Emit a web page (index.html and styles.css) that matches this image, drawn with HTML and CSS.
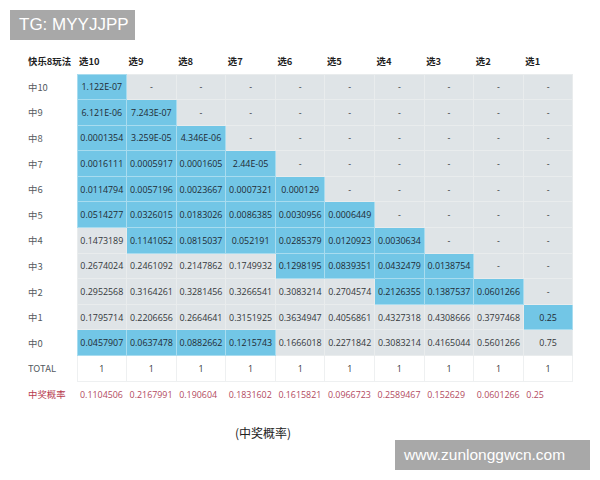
FILE: index.html
```html
<!DOCTYPE html>
<html lang="zh">
<head>
<meta charset="utf-8">
<link rel="stylesheet" href="styles.css">
</head>
<body>
<div class="page">
  <div class="wm wm-top">TG: MYYJJPP</div>
  <table class="prob">
    <thead>
      <tr><th class="lbl">快乐8玩法</th><th>选10</th><th>选9</th><th>选8</th><th>选7</th><th>选6</th><th>选5</th><th>选4</th><th>选3</th><th>选2</th><th>选1</th></tr>
    </thead>
    <tbody>
      <tr><td class="lbl">中10</td><td class="b">1.122E-07</td><td>-</td><td>-</td><td>-</td><td>-</td><td>-</td><td>-</td><td>-</td><td>-</td><td>-</td></tr>
      <tr><td class="lbl">中9</td><td class="b">6.121E-06</td><td class="b">7.243E-07</td><td>-</td><td>-</td><td>-</td><td>-</td><td>-</td><td>-</td><td>-</td><td>-</td></tr>
      <tr><td class="lbl">中8</td><td class="b">0.0001354</td><td class="b">3.259E-05</td><td class="b">4.346E-06</td><td>-</td><td>-</td><td>-</td><td>-</td><td>-</td><td>-</td><td>-</td></tr>
      <tr><td class="lbl">中7</td><td class="b">0.0016111</td><td class="b">0.0005917</td><td class="b">0.0001605</td><td class="b">2.44E-05</td><td>-</td><td>-</td><td>-</td><td>-</td><td>-</td><td>-</td></tr>
      <tr><td class="lbl">中6</td><td class="b">0.0114794</td><td class="b">0.0057196</td><td class="b">0.0023667</td><td class="b">0.0007321</td><td class="b">0.000129</td><td>-</td><td>-</td><td>-</td><td>-</td><td>-</td></tr>
      <tr><td class="lbl">中5</td><td class="b">0.0514277</td><td class="b">0.0326015</td><td class="b">0.0183026</td><td class="b">0.0086385</td><td class="b">0.0030956</td><td class="b">0.0006449</td><td>-</td><td>-</td><td>-</td><td>-</td></tr>
      <tr><td class="lbl">中4</td><td>0.1473189</td><td class="b">0.1141052</td><td class="b">0.0815037</td><td class="b">0.052191</td><td class="b">0.0285379</td><td class="b">0.0120923</td><td class="b">0.0030634</td><td>-</td><td>-</td><td>-</td></tr>
      <tr><td class="lbl">中3</td><td>0.2674024</td><td>0.2461092</td><td>0.2147862</td><td>0.1749932</td><td class="b">0.1298195</td><td class="b">0.0839351</td><td class="b">0.0432479</td><td class="b">0.0138754</td><td>-</td><td>-</td></tr>
      <tr><td class="lbl">中2</td><td>0.2952568</td><td>0.3164261</td><td>0.3281456</td><td>0.3266541</td><td>0.3083214</td><td>0.2704574</td><td class="b">0.2126355</td><td class="b">0.1387537</td><td class="b">0.0601266</td><td>-</td></tr>
      <tr><td class="lbl">中1</td><td>0.1795714</td><td>0.2206656</td><td>0.2664641</td><td>0.3151925</td><td>0.3634947</td><td>0.4056861</td><td>0.4327318</td><td>0.4308666</td><td>0.3797468</td><td class="b">0.25</td></tr>
      <tr><td class="lbl">中0</td><td class="b">0.0457907</td><td class="b">0.0637478</td><td class="b">0.0882662</td><td class="b">0.1215743</td><td>0.1666018</td><td>0.2271842</td><td>0.3083214</td><td>0.4165044</td><td>0.5601266</td><td>0.75</td></tr>
      <tr class="total"><td class="lbl">TOTAL</td><td>1</td><td>1</td><td>1</td><td>1</td><td>1</td><td>1</td><td>1</td><td>1</td><td>1</td><td>1</td></tr>
      <tr class="rate"><td class="lbl">中奖概率</td><td>0.1104506</td><td>0.2167991</td><td>0.190604</td><td>0.1831602</td><td>0.1615821</td><td>0.0966723</td><td>0.2589467</td><td>0.152629</td><td>0.0601266</td><td>0.25</td></tr>
    </tbody>
  </table>
  <div class="caption">(中奖概率)</div>
  <div class="wm wm-bottom">www.zunlonggwcn.com</div>
</div>
</body>
</html>
```

FILE: styles.css
```css
html, body {
  margin: 0;
  padding: 0;
  background: #ffffff;
}
.page {
  position: relative;
  width: 600px;
  height: 480px;
  overflow: hidden;
  font-family: "Open Sans", "Noto Sans CJK SC", sans-serif;
  color: #33373a;
  padding-top: 48px;
  box-sizing: border-box;
}
.wm {
  position: absolute;
  background: #a8a8a8;
  color: #ffffff;
  font-family: "Liberation Sans", "Noto Sans", sans-serif;
}
.wm-top {
  left: 10px;
  top: 10px;
  width: 125px;
  height: 30px;
  line-height: 30px;
  font-size: 17px;
  padding-left: 9px;
  box-sizing: border-box;
}
.wm-bottom {
  left: 395px;
  top: 440px;
  width: 195px;
  height: 30px;
  line-height: 30px;
  font-size: 15.5px;
  padding-left: 9px;
  box-sizing: border-box;
}
.prob {
  margin-left: 25px;
  border-collapse: collapse;
  table-layout: fixed;
  width: 548px;
}
.prob th, .prob td {
  width: 49.6px;
  height: 25.6px;
  padding: 0;
  box-sizing: border-box;
  font-size: 8.9px;
  white-space: nowrap;
  overflow: hidden;
}
.prob th {
  height: 26px;
  text-align: left;
  padding-left: 2px;
  font-weight: 700;
  font-size: 9.4px;
  color: #1f1f1f;
  font-family: "Noto Sans CJK SC", sans-serif;
}
.prob .lbl {
  width: 52px;
  text-align: left;
  padding-left: 3px;
  background: #ffffff;
  border: none;
  color: #555a5e;
  font-size: 9.4px;
  font-family: "Noto Sans CJK SC", "Open Sans", sans-serif;
}
.prob th.lbl {
  color: #1f1f1f;
  padding-left: 3px;
}
.prob tbody td {
  text-align: center;
  background: #dfe4e7;
  border: 1px solid #e9eced;
}
.prob tbody td.b {
  background: #72c6e6;
  border: 1px solid #a8dcef;
  color: #1f2a33;
}
.prob tbody td.lbl {
  background: #ffffff;
  border: none;
}
.prob tr.total td {
  background: #ffffff;
  border: 1px solid #eef0f1;
}
.prob tr.total td.lbl {
  border: none;
}
.prob tr.rate td {
  background: #ffffff;
  border: none;
  text-align: left;
  padding-left: 3px;
  color: #b2495e;
}
.prob tr.rate td.lbl {
  color: #b73a4e;
}
.caption {
  margin-top: 17px;
  margin-left: 235px;
  font-size: 12px;
  font-family: "Noto Sans CJK SC", sans-serif;
  color: #222222;
}
```
